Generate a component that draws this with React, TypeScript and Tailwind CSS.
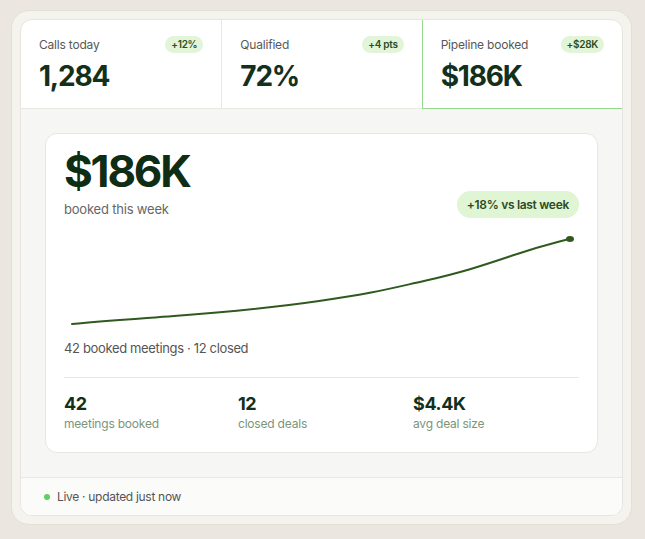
import React from "react";

const stats = [
  { label: "Calls today", value: "1,284", delta: "+12%" },
  { label: "Qualified", value: "72%", delta: "+4 pts" },
  { label: "Pipeline booked", value: "$186K", delta: "+$28K", active: true },
];

const totals = [
  { value: "42", label: "meetings booked" },
  { value: "12", label: "closed deals" },
  { value: "$4.4K", label: "avg deal size" },
];

const Chart = () => (
  <svg width="515" height="106" viewBox="0 0 515 106" className="block">
    <path
      d="M8 94 C 40 91, 70 89, 110 86 S 200 79, 255 71 S 320 60, 360 51 S 420 35, 450 25 S 490 13, 505 9"
      fill="none"
      stroke="#2f5a1f"
      strokeWidth="2"
      strokeLinecap="round"
    />
    <ellipse cx="506" cy="9" rx="4" ry="3" fill="#2f5a1f" />
  </svg>
);

export default function App() {
  return (
    <div
      className="min-h-[539px] bg-[#ebe7e0] pt-[10px] pl-[11px]"
      style={{ fontFamily: "Inter, 'Liberation Sans', sans-serif" }}
    >
      <div className="w-[621px] rounded-[18px] border border-[#e4dfd5] bg-[#f5f3ee] p-[8px]">
        <div className="overflow-hidden rounded-[12px] border border-[#e7e5e0] bg-white">
          {/* top stats */}
          <div className="grid grid-cols-3">
            {stats.map((s, i) => (
              <div
                key={s.label}
                className={
                  s.active
                    ? "h-[89px] border-b border-l border-[#93d88c] px-[18px] pt-[16px]"
                    : i === 0
                    ? "h-[89px] border-b border-[#e8e8e5] px-[18px] pt-[16px]"
                    : "h-[89px] border-b border-l border-[#e8e8e5] px-[18px] pt-[16px]"
                }
              >
                <div className="flex items-center justify-between">
                  <span className="text-[12px] leading-[16px] tracking-[-0.2px] text-[#585858]">{s.label}</span>
                  <span className="rounded-full bg-[#e2f5d8] px-[6px] py-[2px] text-[10px] font-semibold leading-[13px] tracking-[-0.3px] text-[#2c4d24]">
                    {s.delta}
                  </span>
                </div>
                <div className="mt-[7px] text-[28px] font-bold leading-[32px] tracking-[-1.2px] text-[#12301a]">
                  {s.value}
                </div>
              </div>
            ))}
          </div>

          {/* middle */}
          <div className="bg-[#f6f6f4] px-[24px] pt-[24px] pb-[24px]">
            <div className="rounded-[12px] border border-[#e6e6e3] bg-white px-[18px] pt-[13px] pb-[20px]">
              <div className="flex items-end justify-between">
                <div>
                  <div className="text-[44px] font-bold leading-[48px] tracking-[-2.2px] text-[#0f2c15]">
                    $186K
                  </div>
                  <div className="mt-[5px] text-[13px] leading-[18px] tracking-[-0.2px] text-[#666]">booked this week</div>
                </div>
                <span className="rounded-full bg-[#dff5d3] px-[10px] py-[5px] text-[12px] font-semibold leading-[17px] tracking-[-0.3px] text-[#2d4a26]">
                  +18% vs last week
                </span>
              </div>

              <div className="mt-[12px]">
                <Chart />
              </div>

              <div className="mt-[3px] text-[13px] leading-[18px] tracking-[-0.35px] text-[#555]">
                42 booked meetings · 12 closed
              </div>

              <div className="mt-[20px] grid grid-cols-[174px_175px_1fr] border-t border-[#e8e8e5] pt-[15px]">
                {totals.map((t) => (
                  <div key={t.label}>
                    <div className="text-[18px] font-bold leading-[22px] tracking-[-0.4px] text-[#12301a]">{t.value}</div>
                    <div className="mt-[1px] text-[12px] leading-[16px] tracking-[-0.2px] text-[#7a957a]">{t.label}</div>
                  </div>
                ))}
              </div>
            </div>
          </div>

          {/* footer */}
          <div className="flex h-[38px] items-center gap-[7px] border-t border-[#e8e8e5] bg-[#fbfbfa] px-[23px]">
            <span className="h-[6px] w-[6px] rounded-full bg-[#5fcf62]" />
            <span className="text-[12px] leading-[16px] tracking-[-0.3px] text-[#555]">Live · updated just now</span>
          </div>
        </div>
      </div>
    </div>
  );
}
